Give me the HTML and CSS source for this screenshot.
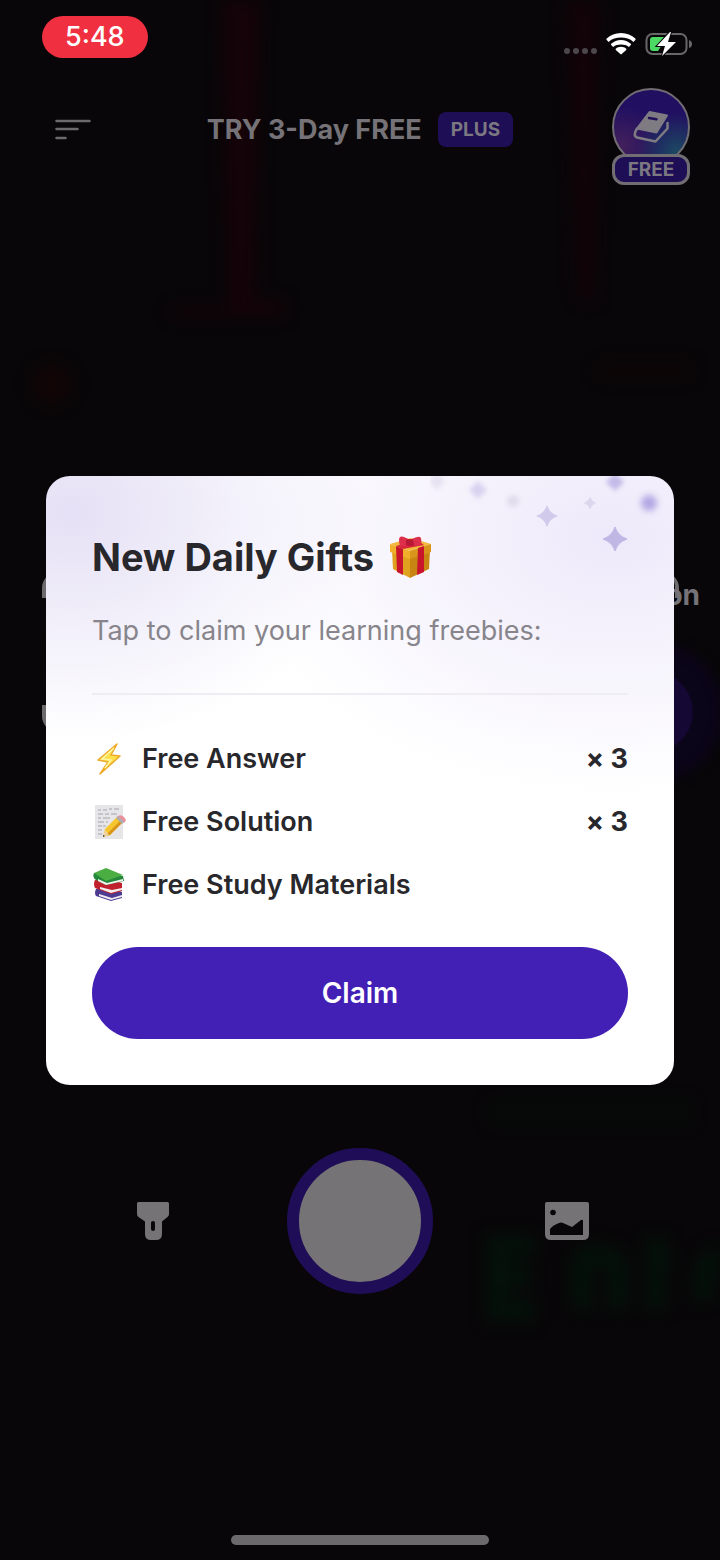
FILE: index.html
```html
<!DOCTYPE html>
<html lang="en">
<head>
<meta charset="utf-8">
<meta name="viewport" content="width=device-width, initial-scale=1">
<title>New Daily Gifts</title>
<link rel="stylesheet" href="styles.css">
</head>
<body>
<div class="screen">
  <svg class="scene" viewBox="0 0 720 1560" preserveAspectRatio="xMidYMin slice" aria-hidden="true">
    <defs>
      <filter id="soft" x="-30%" y="-30%" width="160%" height="160%" color-interpolation-filters="sRGB"><feGaussianBlur stdDeviation="8"/></filter>
    </defs>
    <g filter="url(#soft)">
      <path fill="#150309" d="M222 0h38l-6 300h30v16H170v-8h58z"/>
      <path fill="#120308" d="M566 0h34l-6 300h-16z"/>
      <circle cx="52" cy="384" r="20" fill="#120506"/>
      <path fill="#0f0506" d="M600 364h90v12h-90z"/>
      <g fill="none" stroke="#04110a" stroke-width="22">
        <path d="M535 1246h-38v64h38M497 1276h34M582 1310v-50q22-14 36 6v44M656 1238v72M646 1258h24M720 1256q-24 10-14 44"/>
        <path d="M490 1112h200" stroke="#060b08"/>
      </g>
    </g>
  </svg>

  <header class="status-bar">
    <time class="clock">5:48</time>
    <div class="indicators">
      <svg class="signal" width="34" height="8" viewBox="0 0 34 8" fill="#4b474b" role="img" aria-label="No signal"><circle cx="4" cy="4" r="3"/><circle cx="13" cy="4" r="3"/><circle cx="22" cy="4" r="3"/><circle cx="31" cy="4" r="3"/></svg>
      <svg width="30" height="24" viewBox="0 0 30 24" fill="#fff" role="img" aria-label="Wi-Fi"><path d="M15 1C9.300 1 4.300 3.100.700 6.500q-.700.800 0 1.500l1.900 1.900C6 6.700 10.300 5.600 15 5.600s9 1.100 12.400 4.300L29.300 8q.700-.700 0-1.500C25.700 3.100 20.700 1 15 1zM15 8c-3.900 0-7 1.300-9.800 3.800q-.600.700 0 1.300L7.100 15C9.300 13 12 12.400 15 12.400s5.700.6 7.900 2.600l1.900-1.900q.600-.600 0-1.300C22 9.300 18.900 8 15 8zM15 14.800c-2 0-3.800.7-5.200 1.900q-.500.600 0 1.200l4.500 4.200q.7.600 1.400 0l4.500-4.200q.5-.6 0-1.200C18.800 15.500 17 14.800 15 14.800z"/></svg>
      <svg width="48" height="26" viewBox="0 0 48 26" role="img" aria-label="Battery charging"><rect x="1.500" y="3" width="40" height="20" rx="6" fill="none" stroke="#69666a" stroke-width="2"/><path d="M44 9q3 1 3 4t-3 4z" fill="#69666a"/><path d="M8 6h14l-9 14H8q-3 0-3-3V9q0-3 3-3z" fill="#4bd964"/><path d="M25 1 12 15h8l-3 10 14-14h-8l3-10z" fill="#fff" stroke="#080508" stroke-width="2" paint-order="stroke"/></svg>
    </div>
  </header>

  <nav class="top-nav">
    <button class="menu-button" type="button" aria-label="Menu">
      <svg width="36" height="22" viewBox="0 0 36 22" fill="none" stroke="#6c6a6d" stroke-width="2.500" stroke-linecap="round"><path d="M1.500 2h33M1.500 10h21M1.500 19h9"/></svg>
    </button>
    <div class="trial">
      <h1 class="trial-title">TRY 3-Day FREE</h1>
      <span class="plus-badge">PLUS</span>
    </div>
    <button class="book-button" type="button">
      <span class="book-disc">
        <svg width="36" height="34" viewBox="0 0 36 34" role="img" aria-label="Book"><path d="M16.500 2 34 5.500 23.500 22.500 4 18.500z" fill="#7e7b83" stroke="#7e7b83" stroke-width="2" stroke-linejoin="round"/><path d="M16 8l7.500 1.300" stroke="#221158" stroke-width="2.500" stroke-linecap="round"/><path d="M4 18.500Q-.5 25.500 4 27.500l18.500 4L34.500 18.500V13" fill="none" stroke="#7e7b83" stroke-width="2.500" stroke-linejoin="round" stroke-linecap="round"/></svg>
      </span>
      <span class="book-tag">FREE</span>
    </button>
  </nav>

  <main class="camera">
    <div class="viewfinder">
      <span class="handle"></span>
      <span class="mode-label">on</span>
    </div>
    <div class="controls">
      <button class="tool" type="button" aria-label="Flashlight">
        <svg width="34" height="40" viewBox="0 0 34 40" fill="#757376"><path fill-rule="evenodd" d="M2.500 1h29q1.500 0 1.500 1.500V13q0 2-1.500 3L26 20.500V33q0 6-6 6h-5q-6 0-6-6V20.500L2.500 16Q1 15 1 13V2.500Q1 1 2.500 1zM17 20q-2 0-2 2v6q0 2 2 2t2-2v-6q0-2-2-2z"/></svg>
      </button>
      <button class="shutter" type="button" aria-label="Take photo"></button>
      <button class="tool" type="button" aria-label="Photo library">
        <svg width="44" height="40" viewBox="0 0 44 40"><path d="M2 1h40q2 0 2 2v30q0 6-6 6H6q-6 0-6-6V3q0-2 2-2z" fill="#757376"/><circle cx="8" cy="11.500" r="2.800" fill="#080608"/><path d="M5 34v-6q3-4 9-6 2-1 4 0l9 4 9-7q2-1 2 1v14z" fill="#080608"/></svg>
      </button>
    </div>
    <div class="home-indicator"></div>
  </main>

  <div class="overlay">
    <section class="dialog" role="dialog" aria-modal="true" aria-labelledby="gift-title">
      <svg class="sparkles" width="244" height="90" viewBox="0 0 244 90" aria-hidden="true">
        <defs>
          <filter id="b1" x="-50%" y="-50%" width="200%" height="200%" color-interpolation-filters="sRGB"><feGaussianBlur stdDeviation="2"/></filter>
          <filter id="b3" x="-80%" y="-80%" width="260%" height="260%" color-interpolation-filters="sRGB"><feGaussianBlur stdDeviation="3"/></filter>
          <path id="star" d="M0-12Q3-3 12 0Q3 3 0 12Q-3 3-12 0Q-3-3 0-12z" stroke-width="1" stroke-linejoin="round"/>
        </defs>
        <g filter="url(#b1)">
          <path d="M7-4l8 9-8 9-8-9z" fill="#e6e2f1"/>
          <path d="M48 5l9 9-9 9-9-9z" fill="#d9d3f0"/>
          <circle cx="83" cy="25" r="6" fill="#e0dcec"/>
          <path d="M185-3l9 9-9 9-9-9z" fill="#c4bae8"/>
        </g>
        <circle cx="219" cy="27" r="8" fill="#b3a7e3" filter="url(#b3)"/>
        <use href="#star" transform="translate(117 40) scale(.85)" fill="#d2caeb" stroke="#d2caeb"/>
        <use href="#star" transform="translate(160 27) scale(.5)" fill="#dcd7ec" stroke="#dcd7ec"/>
        <use href="#star" transform="translate(185 63)" fill="#c1b7e5" stroke="#c1b7e5"/>
      </svg>

      <h2 class="dialog-title" id="gift-title">New Daily Gifts
        <svg width="44" height="44" viewBox="0 0 44 44" role="img" aria-label="Gift"><path d="M3 15 21 21v22L4 34z" fill="#e0a21e"/><path d="M21 21 41 15l-1 19-19 9z" fill="#c98512"/><path d="M1 9 22 3l20 6-21 7z" fill="#f4b93a"/><path d="M1 9 21 16v8L1 17z" fill="#f0ae2b"/><path d="M21 16 42 9v8l-21 7z" fill="#d8941b"/><path d="m7 11 7 3v26l-6-3zM29 13l6-2v26l-7 3z" fill="#c8152c"/><path d="m7 11 21-6 7 5-21 4z" fill="#d8243c"/><path d="M21 5Q13 0 11 2T11 11q5 1 10-2 6 3 11 1 1-7-1-8T21 5z" fill="#dc2f4b"/><path d="M17 5q4-2 7 0l1 5q-4 2-8 0z" fill="#b81835"/></svg>
      </h2>
      <p class="dialog-text">Tap to claim your learning freebies:</p>
      <hr class="divider">
      <ul class="gifts">
        <li class="gift">
          <svg class="gift-icon" width="34" height="34" viewBox="0 0 34 34" aria-hidden="true"><path d="M25 2 6 18l10 2L8 32 28 14l-9-1z" fill="#fde04a" stroke="#eda928" stroke-width="1.500" stroke-linejoin="round"/><path d="M22 6 10 17l9 1-6 8" fill="none" stroke="#fff6a8" stroke-width="1.500"/></svg>
          <span class="gift-name">Free Answer</span>
          <span class="gift-count">× 3</span>
        </li>
        <li class="gift">
          <svg class="gift-icon" width="34" height="34" viewBox="0 0 34 34" aria-hidden="true"><path d="M3 0h28v34H3z" fill="#e6e5e7"/><path d="M6 5h3m2 0h4m2-1h3m2 0h5M6 9h5m2 0h4m2 0h6M6 13h3m2 0h7M6 17h6m2 0h2M6 21h4m1 0h3M6 25h4M6 29h4" stroke="#a5a3a9" stroke-width="1"/><path d="m13 24 13-13 6 5-14 14-7 2z" fill="#f7c62f"/><path d="m16 28 14-14 2 2-14 14-4 1z" fill="#d99517"/><path d="M26 11q3-2 6 1t1 5l-2 1-6-5z" fill="#e9929c"/><path d="m24 13 6 6 2-2-6-6z" fill="#a9adb2"/><path d="m13 25 4 5-6 2z" fill="#efd2a1"/><path d="m11 30 2 1-2 1z" fill="#333"/></svg>
          <span class="gift-name">Free Solution</span>
          <span class="gift-count">× 3</span>
        </li>
        <li class="gift">
          <svg class="gift-icon" width="34" height="34" viewBox="0 0 34 34" aria-hidden="true"><path d="M4 21q-2 4 0 7l15 5 11-3v-6L14 19z" fill="#4d3b91"/><path d="m7 26 13 4 10-3v2l-11 3-12-4z" fill="#eceaf0"/><path d="M3 12q-2 4 0 8l16 6 11-3v-8L15 11z" fill="#c1212e"/><path d="m8 19 12 3 10-2v2l-11 3-11-4z" fill="#f3eeee"/><path d="M2 5q-2 4 2 7l10 5 18-4-1-5z" fill="#24873a"/><path d="m6 11 9 4 16-4v2l-17 4-8-4z" fill="#f1f3ef"/><path d="M2 5 14 0l17 7-17 6z" fill="#4bae43"/></svg>
          <span class="gift-name">Free Study Materials</span>
        </li>
      </ul>
      <button class="claim" type="button">Claim</button>
    </section>
  </div>
</div>
</body>
</html>
```
FILE: styles.css
```css
* {
  box-sizing: border-box;
}

body {
  margin: 0;
  background: #080608;
  font-family: Inter, "Liberation Sans", sans-serif;
}

button {
  margin: 0;
  padding: 0;
  border: 0;
  background: none;
  font: inherit;
}

svg {
  display: block;
}

.screen {
  position: relative;
  display: flex;
  flex-direction: column;
  min-height: 100vh;
  overflow: hidden;
}

.scene {
  position: absolute;
  inset: 0;
  width: 100%;
  height: 100%;
}

.status-bar,
.top-nav,
.camera {
  position: relative;
}

.status-bar {
  display: flex;
  justify-content: space-between;
  align-items: flex-start;
  padding: 16px 27px 0 42px;
}

.clock {
  padding: 0 23px;
  border-radius: 21px;
  background: #f03040;
  color: #fff;
  font-size: 27px;
  font-weight: 500;
  line-height: 42px;
}

.indicators {
  display: flex;
  align-items: center;
  gap: 9px;
  padding-top: 15px;
}

.signal {
  margin-top: 14px;
}

.top-nav {
  display: grid;
  grid-template-columns: 1fr auto 1fr;
  align-items: start;
  padding: 30px 30px 0;
}

.menu-button {
  justify-self: start;
  padding: 31px 25px;
}

.trial {
  display: flex;
  align-items: center;
  gap: 16px;
  padding-top: 24px;
}

.trial-title {
  margin: 0;
  color: #757377;
  font-size: 27px;
  font-weight: 700;
  line-height: 34px;
}

.plus-badge {
  padding: 0 13px;
  border-radius: 8px;
  background: #1e0e55;
  color: #7b7881;
  font-size: 19px;
  font-weight: 700;
  line-height: 35px;
}

.book-button {
  display: flex;
  flex-direction: column;
  align-items: center;
  justify-self: end;
  width: 78px;
}

.book-disc {
  display: grid;
  place-items: center;
  width: 78px;
  height: 78px;
  border: 2px solid #706d73;
  border-radius: 50%;
  background: radial-gradient(circle at 85% 85%, #1c4a62, transparent 45%), radial-gradient(circle at 10% 75%, #43205c, transparent 45%), #211061;
}

.book-tag {
  width: 78px;
  margin-top: -12px;
  border: 3px solid #706d73;
  border-radius: 12px;
  background: #1e0e55;
  color: #7b7881;
  font-size: 19px;
  font-weight: 700;
  line-height: 25px;
}

.camera {
  display: flex;
  flex: 1;
  flex-direction: column;
}

.viewfinder {
  position: relative;
  height: 160px;
  margin: 387px 41px 0 42px;
  border: solid #6d6a6d;
  border-width: 0 4px;
  border-radius: 16px;
}

.viewfinder::before {
  content: "";
  position: absolute;
  inset: 26px -4px 27px;
  background: #080608;
}

.handle {
  position: absolute;
  top: 100px;
  right: -18px;
  width: 80px;
  height: 80px;
  border-radius: 50%;
  background: #150834;
  box-shadow: 0 0 12px 30px #0b0519;
}

.mode-label {
  position: absolute;
  top: 6px;
  right: -25px;
  color: #757377;
  font-size: 28px;
  font-weight: 700;
  line-height: 34px;
}

.controls {
  display: flex;
  align-items: center;
  justify-content: space-between;
  margin-top: 416px;
  padding: 0 130px;
}

.tool {
  display: grid;
  place-items: center;
  width: 46px;
  height: 46px;
}

.shutter {
  width: 146px;
  height: 146px;
  border: 12px solid #1f0e57;
  border-radius: 50%;
  background: #757376;
}

.home-indicator {
  width: 258px;
  height: 10px;
  margin: auto auto 15px;
  border-radius: 5px;
  background: #6c696c;
}

.overlay {
  position: absolute;
  inset: 0;
  display: grid;
  align-items: center;
  padding: 0 46px;
}

.dialog {
  position: relative;
  padding: 56px 46px 46px;
  border-radius: 24px;
  overflow: hidden;
  background: radial-gradient(ellipse 300px 230px at 4% 6%, #e5e0f5, transparent), radial-gradient(ellipse 380px 260px at 90% 10%, #eee9fa, transparent), #fff;
  color: #28272c;
}

.sparkles {
  position: absolute;
  top: 0;
  right: 0;
}

.dialog-title {
  display: flex;
  align-items: center;
  gap: 15px;
  margin: 0;
  font-size: 38px;
  font-weight: 700;
  line-height: 50px;
}

.dialog-text {
  margin: 32px 0 0;
  color: #87858b;
  font-size: 27px;
  line-height: 34px;
}

.divider {
  height: 2px;
  margin: 45px 0 0;
  border: 0;
  background: #efedf3;
}

.gifts {
  display: flex;
  flex-direction: column;
  gap: 29px;
  margin: 47px 0 45px;
  padding: 0;
  list-style: none;
}

.gift {
  display: flex;
  align-items: center;
  gap: 16px;
  font-size: 27px;
  font-weight: 600;
  line-height: 34px;
}

.gift-count {
  margin-left: auto;
  font-weight: 700;
  font-feature-settings: "calt" 0;
}

.claim {
  width: 100%;
  border-radius: 46px;
  background: #4220b5;
  color: #fff;
  font-size: 28px;
  font-weight: 600;
  line-height: 92px;
}
```
